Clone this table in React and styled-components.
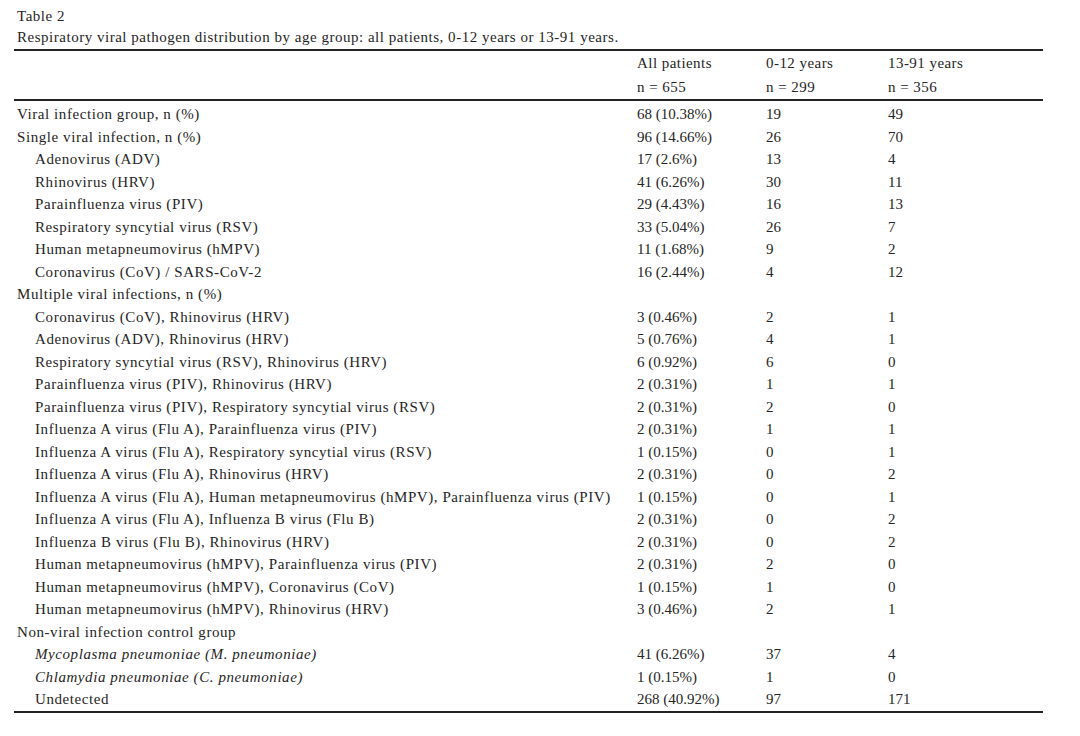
import React from "react";
import styled, { createGlobalStyle } from "styled-components";

const Global = createGlobalStyle`
  html, body { margin: 0; padding: 0; background: #ffffff; }
  body {
    font-family: "Liberation Serif", "Times New Roman", serif;
    color: #262626;
  }
`;

const Page = styled.div`
  width: 1080px;
  height: 736px;
  box-sizing: border-box;
  padding: 6px 37px 0 14px;
  font-size: 15px;
  letter-spacing: 0.52px;
`;

const Title = styled.div`
  line-height: 21px;
  padding-left: 3px;
`;

const Caption = styled.div`
  line-height: 21px;
  padding-left: 3px;
`;

const Table = styled.div`
  display: grid;
  grid-template-columns: 623px 129px 122px 1fr;
  border-top: 2px solid #222;
  border-bottom: 2px solid #222;
  margin-top: 1px;
`;

const Head = styled.div`
  display: contents;
`;

const HeadCell = styled.div`
  line-height: 23.5px;
  letter-spacing: 0.45px;
  padding-top: ${(p) => (p.$first ? "1px" : "0")};
  border-bottom: ${(p) => (p.$last ? "2px solid #222" : "none")};
  white-space: nowrap;
`;

const Cell = styled.div`
  line-height: 22.5px;
  letter-spacing: 0;
  white-space: nowrap;
  padding-top: ${(p) => (p.$first ? "2px" : "0")};
`;

const LabelCell = styled(Cell)`
  letter-spacing: 0.57px;
  padding-left: ${(p) => (p.$indent ? "21px" : "3px")};
  font-style: ${(p) => (p.$italic ? "italic" : "normal")};
`;

const rows = [
  ["Viral infection group, n (%)", "68 (10.38%)", "19", "49"],
  ["Single viral infection, n (%)", "96 (14.66%)", "26", "70"],
  ["Adenovirus (ADV)", "17 (2.6%)", "13", "4", 1],
  ["Rhinovirus (HRV)", "41 (6.26%)", "30", "11", 1],
  ["Parainfluenza virus (PIV)", "29 (4.43%)", "16", "13", 1],
  ["Respiratory syncytial virus (RSV)", "33 (5.04%)", "26", "7", 1],
  ["Human metapneumovirus (hMPV)", "11 (1.68%)", "9", "2", 1],
  ["Coronavirus (CoV) / SARS-CoV-2", "16 (2.44%)", "4", "12", 1],
  ["Multiple viral infections, n (%)", "", "", ""],
  ["Coronavirus (CoV), Rhinovirus (HRV)", "3 (0.46%)", "2", "1", 1],
  ["Adenovirus (ADV), Rhinovirus (HRV)", "5 (0.76%)", "4", "1", 1],
  ["Respiratory syncytial virus (RSV), Rhinovirus (HRV)", "6 (0.92%)", "6", "0", 1],
  ["Parainfluenza virus (PIV), Rhinovirus (HRV)", "2 (0.31%)", "1", "1", 1],
  ["Parainfluenza virus (PIV), Respiratory syncytial virus (RSV)", "2 (0.31%)", "2", "0", 1],
  ["Influenza A virus (Flu A), Parainfluenza virus (PIV)", "2 (0.31%)", "1", "1", 1],
  ["Influenza A virus (Flu A), Respiratory syncytial virus (RSV)", "1 (0.15%)", "0", "1", 1],
  ["Influenza A virus (Flu A), Rhinovirus (HRV)", "2 (0.31%)", "0", "2", 1],
  ["Influenza A virus (Flu A), Human metapneumovirus (hMPV), Parainfluenza virus (PIV)", "1 (0.15%)", "0", "1", 1],
  ["Influenza A virus (Flu A), Influenza B virus (Flu B)", "2 (0.31%)", "0", "2", 1],
  ["Influenza B virus (Flu B), Rhinovirus (HRV)", "2 (0.31%)", "0", "2", 1],
  ["Human metapneumovirus (hMPV), Parainfluenza virus (PIV)", "2 (0.31%)", "2", "0", 1],
  ["Human metapneumovirus (hMPV), Coronavirus (CoV)", "1 (0.15%)", "1", "0", 1],
  ["Human metapneumovirus (hMPV), Rhinovirus (HRV)", "3 (0.46%)", "2", "1", 1],
  ["Non-viral infection control group", "", "", ""],
  ["Mycoplasma pneumoniae (M. pneumoniae)", "41 (6.26%)", "37", "4", 1, 1],
  ["Chlamydia pneumoniae (C. pneumoniae)", "1 (0.15%)", "1", "0", 1, 1],
  ["Undetected", "268 (40.92%)", "97", "171", 1],
];

export default function App() {
  return (
    <>
      <Global />
      <Page>
        <Title>Table 2</Title>
        <Caption>
          Respiratory viral pathogen distribution by age group: all patients, 0-12 years or 13-91 years.
        </Caption>
        <Table>
          <Head>
            <HeadCell $first />
            <HeadCell $first>All patients</HeadCell>
            <HeadCell $first>0-12 years</HeadCell>
            <HeadCell $first>13-91 years</HeadCell>
            <HeadCell $last />
            <HeadCell $last>n = 655</HeadCell>
            <HeadCell $last>n = 299</HeadCell>
            <HeadCell $last>n = 356</HeadCell>
          </Head>
          {rows.map((r, i) => (
            <React.Fragment key={i}>
              <LabelCell $first={i === 0} $indent={!!r[4]} $italic={!!r[5]}>
                {r[0]}
              </LabelCell>
              <Cell $first={i === 0}>{r[1]}</Cell>
              <Cell $first={i === 0}>{r[2]}</Cell>
              <Cell $first={i === 0}>{r[3]}</Cell>
            </React.Fragment>
          ))}
        </Table>
      </Page>
    </>
  );
}
